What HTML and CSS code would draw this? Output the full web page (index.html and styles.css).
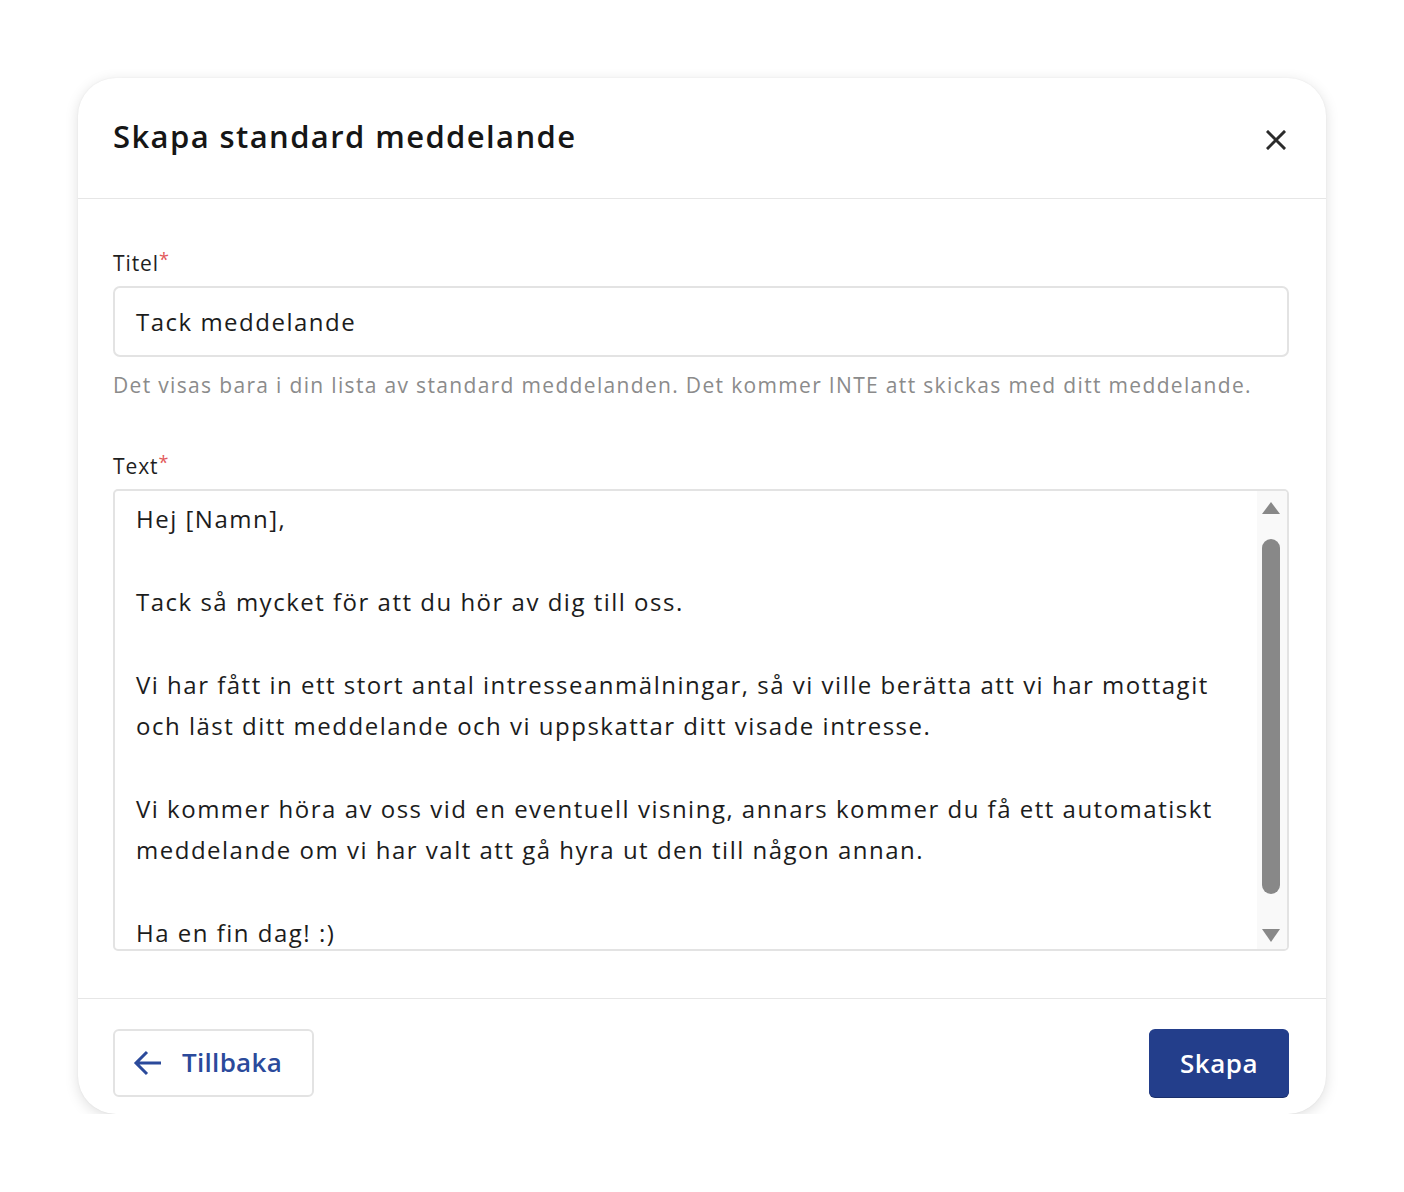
FILE: index.html
```html
<!DOCTYPE html>
<html lang="sv">
<head>
<meta charset="utf-8">
<title>Skapa standard meddelande</title>
<link rel="stylesheet" href="styles.css">
</head>
<body>
<div class="modal">
  <div class="modal-header">
    <h1 class="modal-title">Skapa standard meddelande</h1>
    <button class="close-btn" aria-label="Stäng">
      <svg width="20" height="20" viewBox="0 0 20 20"><path d="M2 2 L18 18 M18 2 L2 18" stroke="#2b2b2b" stroke-width="3" stroke-linecap="square" fill="none"/></svg>
    </button>
  </div>
  <div class="modal-body">
    <div class="field">
      <label class="label">Titel<span class="req">*</span></label>
      <div class="input">Tack meddelande</div>
      <div class="help">Det visas bara i din lista av standard meddelanden. Det kommer INTE att skickas med ditt meddelande.</div>
    </div>
    <div class="field field-text">
      <label class="label">Text<span class="req">*</span></label>
      <div class="textarea">
        <div class="textarea-content">
          <p>Hej [Namn],</p>
          <p>Tack så mycket för att du hör av dig till oss.</p>
          <p>Vi har fått in ett stort antal intresseanmälningar, så vi ville berätta att vi har mottagit och läst ditt meddelande och vi uppskattar ditt visade intresse.</p>
          <p>Vi kommer höra av oss vid en eventuell visning, annars kommer du få ett automatiskt meddelande om vi har valt att gå hyra ut den till någon annan.</p>
          <p>Ha en fin dag! :)</p>
        </div>
        <div class="scrollbar">
          <div class="arrow arrow-up"></div>
          <div class="thumb"></div>
          <div class="arrow arrow-down"></div>
        </div>
      </div>
    </div>
  </div>
  <div class="modal-footer">
    <button class="btn btn-back">
      <svg width="30" height="28" viewBox="0 0 30 28"><path d="M28 14 H3 M14 3 L3 14 L14 25" stroke="#2b4a9b" stroke-width="3" fill="none" stroke-linejoin="miter"/></svg>
      <span>Tillbaka</span>
    </button>
    <button class="btn btn-primary">Skapa</button>
  </div>
</div>
</body>
</html>
```
FILE: styles.css
```css
* { box-sizing: border-box; }
html, body { margin: 0; padding: 0; background: #ffffff; }
body {
  font-family: "Open Sans", "Noto Sans", sans-serif;
  color: #1f1f1f;
  padding: 78px 0 0 78px;
}
.modal {
  width: 1248px;
  height: 1036px;
  background: #fff;
  border-radius: 38px;
  box-shadow: 0 3px 14px rgba(0,0,0,0.13), 0 0 2px rgba(0,0,0,0.06);
  display: flex;
  flex-direction: column;
}
.modal-header {
  height: 121px;
  border-bottom: 1px solid #e6e6e6;
  display: flex;
  align-items: center;
  justify-content: space-between;
  padding: 0 38px 0 35px;
}
.modal-title {
  margin: 0;
  font-size: 31px;
  font-weight: 600;
  color: #161616;
  letter-spacing: 1.4px;
  padding-bottom: 4px;
}
.close-btn {
  background: none;
  border: none;
  padding: 0;
  width: 24px;
  height: 24px;
  display: flex;
  align-items: center;
  justify-content: center;
  margin-top: 4px;
}
.modal-body {
  padding: 49px 37px 47px 35px;
  border-bottom: 1px solid #e6e6e6;
}
.field { display: flex; flex-direction: column; }
.field-text { margin-top: 51px; }
.label {
  font-size: 21px;
  line-height: 30px;
  color: #1f1f1f;
  letter-spacing: 0.9px;
  margin-bottom: 8px;
}
.req { color: #e2595b; font-size: 18px; vertical-align: top; line-height: 22px; letter-spacing: 0; }
.input {
  height: 71px;
  border: 2px solid #e3e3e3;
  border-radius: 7px;
  padding: 0 21px;
  display: flex;
  align-items: center;
  font-size: 24px;
  letter-spacing: 1.5px;
  color: #1c1c1c;
}
.help {
  margin-top: 13px;
  font-size: 21px;
  line-height: 30px;
  color: #8b8b8b;
  letter-spacing: 1.33px;
  white-space: nowrap;
}
.textarea {
  position: relative;
  height: 462px;
  border: 2px solid #e3e3e3;
  border-radius: 5px;
  overflow: hidden;
}
.textarea-content {
  padding: 7px 58px 0 21px;
  font-size: 24px;
  line-height: 41.4px;
  letter-spacing: 1.5px;
  color: #1c1c1c;
}
.textarea-content p { margin: 0 0 41.4px 0; }
.scrollbar {
  position: absolute;
  top: 0;
  right: 0;
  width: 30px;
  bottom: 0;
  background: #f9f9f9;
  display: flex;
  flex-direction: column;
  align-items: center;
  padding: 11px 0 6px 0;
}
.arrow { width: 0; height: 0; border-left: 9px solid transparent; border-right: 9px solid transparent; }
.arrow-up { border-bottom: 12px solid #888; margin-right: 2px; }
.arrow-down { border-top: 13px solid #888; margin-right: 2px; }
.thumb {
  width: 18px;
  height: 355px;
  background: #888888;
  border-radius: 9px;
  margin: 25px 2px 35px 0;
}
.modal-footer {
  flex: 1;
  display: flex;
  justify-content: space-between;
  align-items: flex-start;
  padding: 30px 37px 0 35px;
}
.btn {
  font-family: inherit;
  height: 68px;
  border-radius: 6px;
  font-size: 26px;
  font-weight: 600;
  display: flex;
  align-items: center;
  cursor: pointer;
}
.btn-back {
  width: 201px;
  background: #fff;
  border: 2px solid #e3e3e3;
  color: #2b4a9b;
  padding: 0 0 0 18px;
  gap: 19px;
  letter-spacing: 0.3px;
}
.btn-back span { margin-top: -2px; }
.btn-primary {
  width: 140px;
  background: #233e8b;
  border: none;
  color: #fff;
  justify-content: center;
  letter-spacing: 0.5px;
  box-shadow: 0 1px 0 #1a2f6a;
}
```
